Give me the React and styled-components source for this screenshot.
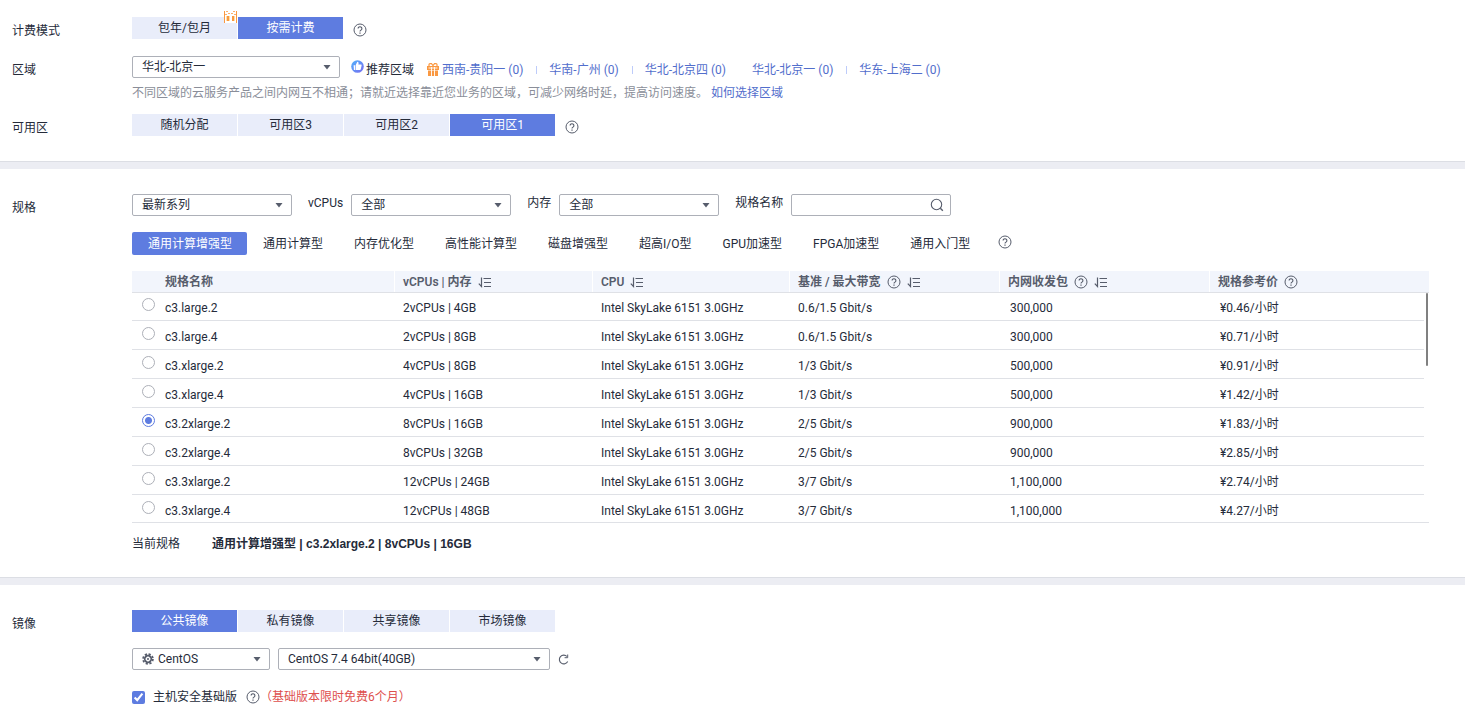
import { useState } from "react";
import styled, { createGlobalStyle } from "styled-components";

const billingModes = ["包年/包月", "按需计费"];
const zones = ["随机分配", "可用区3", "可用区2", "可用区1"];
const imageTypes = ["公共镜像", "私有镜像", "共享镜像", "市场镜像"];

const regions = [
  { name: "西南-贵阳一 (0)", gift: true },
  { name: "华南-广州 (0)", divider: true },
  { name: "华北-北京四 (0)", divider: true },
  { name: "华北-北京一 (0)" },
  { name: "华东-上海二 (0)", divider: true },
];

const families = [
  "通用计算增强型",
  "通用计算型",
  "内存优化型",
  "高性能计算型",
  "磁盘增强型",
  "超高I/O型",
  "GPU加速型",
  "FPGA加速型",
  "通用入门型",
];

const columns = [
  { title: "规格名称" },
  { title: "vCPUs | 内存", sort: true },
  { title: "CPU", sort: true },
  { title: "基准 / 最大带宽", help: true, sort: true },
  { title: "内网收发包", help: true, sort: true },
  { title: "规格参考价", help: true },
];

const cpu = "Intel SkyLake 6151 3.0GHz";
const flavors = [
  ["c3.large.2", "2vCPUs | 4GB", cpu, "0.6/1.5 Gbit/s", "300,000", "¥0.46/小时"],
  ["c3.large.4", "2vCPUs | 8GB", cpu, "0.6/1.5 Gbit/s", "300,000", "¥0.71/小时"],
  ["c3.xlarge.2", "4vCPUs | 8GB", cpu, "1/3 Gbit/s", "500,000", "¥0.91/小时"],
  ["c3.xlarge.4", "4vCPUs | 16GB", cpu, "1/3 Gbit/s", "500,000", "¥1.42/小时"],
  ["c3.2xlarge.2", "8vCPUs | 16GB", cpu, "2/5 Gbit/s", "900,000", "¥1.83/小时"],
  ["c3.2xlarge.4", "8vCPUs | 32GB", cpu, "2/5 Gbit/s", "900,000", "¥2.85/小时"],
  ["c3.3xlarge.2", "12vCPUs | 24GB", cpu, "3/7 Gbit/s", "1,100,000", "¥2.74/小时"],
  ["c3.3xlarge.4", "12vCPUs | 48GB", cpu, "3/7 Gbit/s", "1,100,000", "¥4.27/小时"],
];

const HelpIcon = () => (
  <svg width="14" height="14" viewBox="0 0 14 14" fill="none" stroke="#575d6c">
    <circle cx="7" cy="7" r="6" />
    <path d="M5.1 5.6a1.9 1.8 0 1 1 2.9 1.5c-.7.4-1 .7-1 1.5" strokeWidth="1.1" />
    <path d="M7 9.5v1.2" strokeWidth="1.2" />
  </svg>
);

const SortIcon = () => (
  <svg width="13" height="12" viewBox="0 0 13 12" fill="none" stroke="#575d6c">
    <path d="M3.5 1.500v9L.8 7.600" strokeWidth="1.2" />
    <path d="M5.500 2.500H13M6 6.500h7M6 10.500h7" />
  </svg>
);

const GiftIcon = () => (
  <svg width="12" height="13" viewBox="0 0 12 13" fill="none">
    <path d="M0 3h12v4H0zM1 7.500h10V13H1z" fill="#fa9841" />
    <path d="M2 3V1.500Q2 .6 3 .6h1.500L6 2.500 7.500.6H9q1 0 1 .9V3" stroke="#fa9841" strokeWidth="1.200" />
    <path d="M4.500 4v9M7.500 4v9M1.500 5h9" stroke="#fff" strokeWidth=".9" />
  </svg>
);

const PromoIcon = () => (
  <svg width="13" height="12" viewBox="0 0 13 12">
    <path d="M0 0h13v12H0z" fill="#fff" />
    <path d="M0 0h1v12H0zM12 0h1v12h-1zM3 5h2v5H3zM8 5h2v5H8z" fill="#fa9841" />
    <path d="M2 0h2v1H2zM9 0h2v1H9zM4 2h2v1H4zM7 2h2v1H7zM1 3h2v1H1zM10 3h2v1h-2z" fill="#fcb06c" />
    <path d="M5 5h1v5H5zM10 5h1v5h-1zM2 5h1v5H2z" fill="#fde0a8" />
  </svg>
);

const ThumbIcon = () => (
  <svg width="13" height="13" viewBox="0 0 13 13">
    <defs>
      <linearGradient id="thumb" x1="0" y1="0" x2="1" y2="1">
        <stop offset="0" stopColor="#4fb2fb" />
        <stop offset="1" stopColor="#7a6cf0" />
      </linearGradient>
    </defs>
    <circle cx="6.5" cy="6.5" r="6.3" fill="url(#thumb)" />
    <path d="M2.600 5.300h1.400v4.700H2.900zM4.600 5.200 6.300 1.800c1.300 0 1.500 1 1.100 2.700h2.400c.7 0 .9.5.8 1l-.8 3.700c-.1.500-.5.800-.9.800H4.600z" fill="#fff" />
  </svg>
);

const CaretIcon = () => (
  <svg width="8" height="5" viewBox="0 0 8 5">
    <path d="M.5 0h7L4 4.5z" fill="#575d6c" />
  </svg>
);

const SearchIcon = () => (
  <svg width="14" height="14" viewBox="0 0 14 14" fill="none" stroke="#575d6c" strokeWidth="1.1">
    <circle cx="6.500" cy="6.500" r="5.200" />
    <path d="M10.300 10.300 12.800 12.800" strokeWidth="1.4" />
  </svg>
);

const CentosIcon = () => (
  <svg width="12" height="12" viewBox="0 0 12 12" fill="none" stroke="#575d6c">
    <circle cx="6" cy="6" r="4.900" strokeWidth="1.800" strokeDasharray="2.200 1.648" />
    <circle cx="6" cy="6" r="3.200" strokeWidth="1.900" />
    <path d="M6 3v6M3 6h6" stroke="#fff" strokeWidth=".6" />
    <circle cx="6" cy="6" r="1" fill="#575d6c" stroke="none" />
  </svg>
);

const RefreshIcon = () => (
  <svg width="11" height="11" viewBox="0 0 11 11" fill="none" stroke="#575d6c">
    <path d="M9 2.500A4.400 4.400 0 1 0 9.700 7.500" strokeWidth="1.1" />
    <path d="M9.700.5v3.200H6.600" />
  </svg>
);

const Dropdown = ({ label, width, options, icon }) => (
  <SelectBox $width={width}>
    {icon && <SelectIcon>{icon}</SelectIcon>}
    <Select aria-label={label} $icon={!!icon}>
      {options.map((o) => (
        <option key={o}>{o}</option>
      ))}
    </Select>
    <Caret>
      <CaretIcon />
    </Caret>
  </SelectBox>
);

const Segments = ({ items, initial, promo }) => {
  const [active, setActive] = useState(initial);

  return (
    <SegmentGroup>
      {items.map((item, i) => (
        <Segment
          key={item}
          type="button"
          $active={i === active}
          onClick={() => setActive(i)}
        >
          {item}
          {i === promo && (
            <Promo>
              <PromoIcon />
            </Promo>
          )}
        </Segment>
      ))}
    </SegmentGroup>
  );
};

const Help = () => (
  <IconButton type="button" aria-label="帮助">
    <HelpIcon />
  </IconButton>
);

const App = () => {
  const [family, setFamily] = useState(families[0]);
  const [flavor, setFlavor] = useState(flavors[4]);

  return (
    <main>
      <GlobalStyle />
      <Section $top={17} $bottom={24}>
        <Row $gap={16}>
          <Label>计费模式</Label>
          <Line>
            <Segments items={billingModes} initial={1} promo={0} />
            <LineHelp>
              <Help />
            </LineHelp>
          </Line>
        </Row>
        <Row $gap={12}>
          <Label>区域</Label>
          <div>
            <Line>
              <Dropdown label="区域" width={208} options={["华北-北京一"]} />
              <Recommend>
                <ThumbIcon />
                <RecommendTitle>推荐区域</RecommendTitle>
                {regions.map((region) => (
                  <Region key={region.name}>
                    {region.gift ? (
                      <Gift>
                        <GiftIcon />
                      </Gift>
                    ) : (
                      <Divider $visible={region.divider} />
                    )}
                    <Link href="#">{region.name}</Link>
                  </Region>
                ))}
              </Recommend>
            </Line>
            <Hint>
              不同区域的云服务产品之间内网互不相通；请就近选择靠近您业务的区域，可减少网络时延，提高访问速度。
              <Link href="#">如何选择区域</Link>
            </Hint>
          </div>
        </Row>
        <Row>
          <Label>可用区</Label>
          <Line>
            <Segments items={zones} initial={3} />
            <LineHelp>
              <Help />
            </LineHelp>
          </Line>
        </Row>
      </Section>
      <Band />

      <Section $top={25} $bottom={24}>
        <Row>
          <Label>规格</Label>
          <div>
            <Filters>
              <Dropdown label="系列" width={160} options={["最新系列"]} />
              <Filter>
                vCPUs
                <Dropdown label="vCPUs" width={160} options={["全部"]} />
              </Filter>
              <Filter>
                内存
                <Dropdown label="内存" width={160} options={["全部"]} />
              </Filter>
              <Filter>
                规格名称
                <SearchBox>
                  <SearchInput type="text" aria-label="规格名称" />
                  <SearchButton type="button" aria-label="搜索">
                    <SearchIcon />
                  </SearchButton>
                </SearchBox>
              </Filter>
            </Filters>
            <Tabs>
              {families.map((name) => (
                <Tab
                  key={name}
                  type="button"
                  $active={name === family}
                  onClick={() => setFamily(name)}
                >
                  {name}
                </Tab>
              ))}
              <TabHelp>
                <Help />
              </TabHelp>
            </Tabs>
            <TableBox>
              <TableScroll>
                <Table>
                  <colgroup>
                    <Col $width={25} />
                    <Col $width={238} />
                    <Col $width={198} />
                    <Col $width={197} />
                    <Col $width={210} />
                    <Col $width={210} />
                    <col />
                    <Col $width={5} />
                  </colgroup>
                  <thead>
                    <tr>
                      <HeadSpacer />
                      {columns.map((column) => (
                        <HeadCell key={column.title}>
                          <HeadContent>
                            {column.title}
                            {column.help && <Help />}
                            {column.sort && (
                              <IconButton type="button" aria-label="排序">
                                <SortIcon />
                              </IconButton>
                            )}
                          </HeadContent>
                        </HeadCell>
                      ))}
                      <HeadSpacer />
                    </tr>
                  </thead>
                  <tbody>
                    {flavors.map((row, index) => (
                      <tr key={row[0]}>
                        <RadioCell $first={index === 0}>
                          <Radio
                            type="radio"
                            name="flavor"
                            id={row[0]}
                            checked={row === flavor}
                            onChange={() => setFlavor(row)}
                          />
                        </RadioCell>
                        <Cell $first={index === 0}>
                          <label htmlFor={row[0]}>{row[0]}</label>
                        </Cell>
                        {row.slice(1).map((value, i) => (
                          <Cell key={i} $first={index === 0} $indent={i > 2}>
                            {value}
                          </Cell>
                        ))}
                      </tr>
                    ))}
                  </tbody>
                </Table>
              </TableScroll>
              <ScrollThumb />
            </TableBox>
            <Current>
              当前规格
              <CurrentValue>
                {family} | {flavor[0]} | {flavor[1]}
              </CurrentValue>
            </Current>
          </div>
        </Row>
      </Section>
      <Band />

      <Section $top={25} $bottom={9}>
        <Row>
          <Label>镜像</Label>
          <div>
            <Segments items={imageTypes} initial={0} />
            <ImageLine>
              <Dropdown
                label="操作系统"
                width={138}
                options={["CentOS"]}
                icon={<CentosIcon />}
              />
              <Dropdown
                label="镜像版本"
                width={272}
                options={["CentOS 7.4 64bit(40GB)"]}
              />
              <IconButton type="button" aria-label="刷新">
                <RefreshIcon />
              </IconButton>
            </ImageLine>
            <Security>
              <CheckLabel>
                <Checkbox type="checkbox" defaultChecked />
                主机安全基础版
              </CheckLabel>
              <Help />
              <Notice>（基础版本限时免费6个月）</Notice>
            </Security>
          </div>
        </Row>
      </Section>
    </main>
  );
};

export default App;

const GlobalStyle = createGlobalStyle`
  * {
    box-sizing: border-box;
  }
  body {
    margin: 0;
    background: #ffffff;
    color: #252b3a;
    font: 12px/18px Roboto, "Noto Sans CJK SC", sans-serif;
    white-space: nowrap;
  }
  button, input, select {
    font: inherit;
    color: inherit;
  }
  svg {
    display: block;
    flex: none;
  }
`;

const Section = styled.section`
  padding: ${(p) => p.$top}px 36px ${(p) => p.$bottom}px 12px;
`;

const Band = styled.div`
  height: 8px;
  border-top: 1px solid #dcdee4;
  background: #ecedf3;
`;

const Row = styled.div`
  display: grid;
  grid-template-columns: 120px minmax(0, 1fr);
  margin-bottom: ${(p) => p.$gap || 0}px;
`;

const Label = styled.div`
  padding-top: 5px;
`;

const Line = styled.div`
  display: flex;
`;

const IconButton = styled.button`
  display: block;
  padding: 0;
  border: 0;
  background: none;
  cursor: pointer;
`;

const LineHelp = styled.div`
  margin: 6px 0 0 10px;
`;

const SegmentGroup = styled.div`
  display: flex;
  gap: 1px;
`;

const Segment = styled.button`
  position: relative;
  width: 105px;
  height: 22px;
  padding: 0;
  border: 0;
  background: ${(p) => (p.$active ? "#5e7ce0" : "#e9edfa")};
  color: ${(p) => (p.$active ? "#ffffff" : "#252b3a")};
  cursor: pointer;
`;

const Promo = styled.span`
  position: absolute;
  top: -6px;
  right: 0;
`;

const SelectBox = styled.div`
  position: relative;
  width: ${(p) => p.$width}px;
`;

const Select = styled.select`
  display: block;
  appearance: none;
  width: 100%;
  height: 22px;
  padding: 0 24px 0 ${(p) => (p.$icon ? 25 : 9)}px;
  border: 1px solid #adb0b8;
  border-radius: 2px;
  background: #ffffff;
`;

const SelectIcon = styled.span`
  position: absolute;
  top: 5px;
  left: 10px;
  pointer-events: none;
`;

const Caret = styled.span`
  position: absolute;
  top: 9px;
  right: 9px;
  pointer-events: none;
`;

const Recommend = styled.div`
  display: flex;
  padding: 4px 0 0 11px;
`;

const RecommendTitle = styled.span`
  margin: 1px 13px 0 2px;
`;

const Region = styled.span`
  display: flex;
  align-items: center;
  gap: 3px;
  height: 18px;
  margin-top: 1px;
`;

const Gift = styled.span`
  padding-bottom: 2px;
`;

const Divider = styled.span`
  width: 1px;
  height: 8px;
  margin: 0 9px 0 13px;
  background: ${(p) => (p.$visible ? "#beccfa" : "transparent")};
`;

const Link = styled.a`
  color: #526ecc;
  text-decoration: none;
`;

const Hint = styled.div`
  display: flex;
  gap: 3px;
  margin-top: 5px;
  color: #8a8e99;
`;

const Filters = styled.div`
  display: flex;
  gap: 16px;
`;

const Filter = styled.div`
  display: flex;
  gap: 8px;
`;

const SearchBox = styled.div`
  display: flex;
  width: 160px;
  height: 22px;
  border: 1px solid #adb0b8;
  border-radius: 2px;
`;

const SearchInput = styled.input`
  flex: 1;
  min-width: 0;
  padding: 0 8px;
  border: 0;
  outline: 0;
  background: none;
`;

const SearchButton = styled(IconButton)`
  margin: 0 6px;
`;

const Tabs = styled.div`
  display: flex;
  margin: 16px 0;
`;

const Tab = styled.button`
  height: 23px;
  padding: 0 15px 0 16px;
  border: 0;
  border-radius: 2px;
  background: ${(p) => (p.$active ? "#5e7ce0" : "transparent")};
  color: ${(p) => (p.$active ? "#ffffff" : "#252b3a")};
  cursor: pointer;
`;

const TabHelp = styled.div`
  margin: 3px 0 0 13px;
`;

const TableBox = styled.div`
  position: relative;
`;

const TableScroll = styled.div`
  height: 252px;
  overflow: hidden;
  border-bottom: 1px solid #dfe1e6;
`;

const Table = styled.table`
  width: 100%;
  table-layout: fixed;
  border-collapse: separate;
  border-spacing: 0;
`;

const Col = styled.col`
  width: ${(p) => p.$width}px;
`;

const HeadSpacer = styled.td`
  height: 22px;
  padding: 0;
  border-bottom: 1px solid #dfe1e6;
  background: #f2f5fc;
`;

const HeadCell = styled.th`
  height: 22px;
  padding: 0 0 0 8px;
  border-bottom: 1px solid #dfe1e6;
  background: #f2f5fc;
  box-shadow: inset -1px 0 #ffffff;
  color: #575d6c;
  font-weight: 600;

  &:nth-last-child(2) {
    box-shadow: none;
  }
`;

const HeadContent = styled.div`
  display: flex;
  align-items: center;
  gap: 6px;
`;

const Cell = styled.td`
  height: ${(p) => (p.$first ? 28 : 29)}px;
  padding: ${(p) => (p.$first ? 2 : 4)}px 0 0 ${(p) => (p.$indent ? 10 : 8)}px;
  border-bottom: 1px solid #dfe1e6;
`;

const RadioCell = styled(Cell)`
  padding: ${(p) => (p.$first ? 5 : 6)}px 0 0 10px;
  vertical-align: top;
`;

const Radio = styled.input`
  display: block;
  appearance: none;
  width: 13px;
  height: 13px;
  margin: 0;
  border: 1px solid #adb0b8;
  border-radius: 50%;

  &:checked {
    border-color: #5e7ce0;
    background: radial-gradient(circle, #5e7ce0 3px, #ffffff 4px);
  }
`;

const ScrollThumb = styled.div`
  position: absolute;
  top: 22px;
  right: 1px;
  width: 2px;
  height: 73px;
  border-radius: 1px;
  background: #808080;
`;

const Current = styled.div`
  display: flex;
  gap: 32px;
  margin-top: 12px;
`;

const CurrentValue = styled.strong`
  font-family: "Liberation Sans", "Noto Sans CJK SC", sans-serif;
`;

const ImageLine = styled.div`
  display: flex;
  align-items: center;
  gap: 8px;
  margin: 16px 0 18px;
`;

const Security = styled.div`
  display: flex;
  align-items: center;
`;

const CheckLabel = styled.label`
  display: flex;
  align-items: center;
  gap: 8px;
  margin-right: 9px;
`;

const Checkbox = styled.input`
  width: 13px;
  height: 13px;
  margin: 0;
  accent-color: #5e7ce0;
`;

const Notice = styled.span`
  color: #de504e;
`;
